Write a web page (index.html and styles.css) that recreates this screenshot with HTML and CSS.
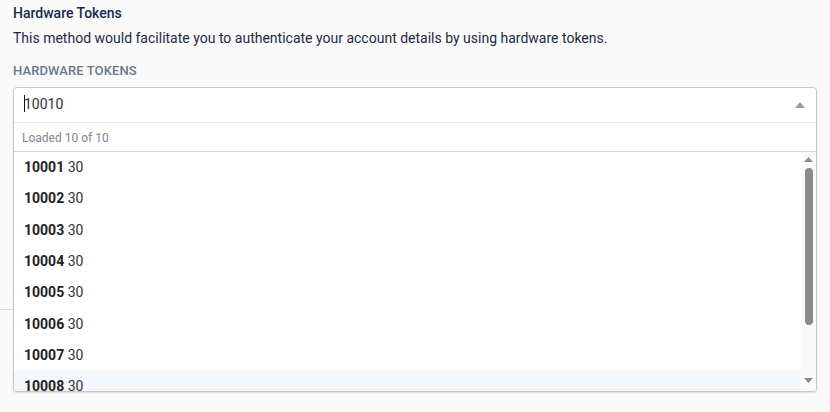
FILE: index.html
```html
<!DOCTYPE html>
<html>
<head>
<meta charset="utf-8">
<link rel="stylesheet" href="styles.css">
</head>
<body>
<div class="page">
  <div class="backline"></div>
  <section class="panel">
    <h3 class="title">Hardware Tokens</h3>
    <p class="desc">This method would facilitate you to authenticate your account details by using hardware tokens.</p>
    <div class="label">HARDWARE TOKENS</div>
    <div class="select">
      <div class="input-row">
        <span class="value"><span class="caret"></span>10010</span>
        <svg class="toggle" width="10" height="6" viewBox="0 0 10 6"><path d="M0 6 L5 0 L10 6 Z" fill="#9a9a9a"/></svg>
      </div>
      <div class="status">Loaded 10 of 10</div>
      <div class="list-wrap">
        <ul class="list">
          <li class="item"><b>10001</b> 30</li>
          <li class="item"><b>10002</b> 30</li>
          <li class="item"><b>10003</b> 30</li>
          <li class="item"><b>10004</b> 30</li>
          <li class="item"><b>10005</b> 30</li>
          <li class="item"><b>10006</b> 30</li>
          <li class="item"><b>10007</b> 30</li>
          <li class="item active"><b>10008</b> 30</li>
          <li class="item"><b>10009</b> 30</li>
          <li class="item"><b>10010</b> 30</li>
        </ul>
        <div class="scrollbar">
          <svg class="arrow" width="9" height="5" viewBox="0 0 9 5"><path d="M0 5 L4.5 0 L9 5 Z" fill="#8a8a8a"/></svg>
          <div class="track"><div class="thumb"></div></div>
          <svg class="arrow" width="9" height="5" viewBox="0 0 9 5"><path d="M0 0 L4.5 5 L9 0 Z" fill="#8a8a8a"/></svg>
        </div>
      </div>
    </div>
  </section>
</div>
</body>
</html>
```

FILE: styles.css
```css
html, body {
  margin: 0;
  padding: 0;
  background: #fafafa;
  font-family: Roboto, "Liberation Sans", Arial, sans-serif;
}
.page {
  position: relative;
  width: 830px;
  height: 412px;
  overflow: hidden;
}
.backline {
  position: absolute;
  left: 0;
  top: 309px;
  width: 20px;
  height: 1px;
  background: #dcdcdc;
}
.panel {
  position: relative;
  padding: 3px 13px 0 13px;
}
.title {
  margin: 0;
  font-size: 14px;
  line-height: 20px;
  font-weight: 500;
  color: #172b4d;
}
.desc {
  margin: 5px 0 0 0;
  font-size: 14px;
  line-height: 20px;
  color: #1c2a44;
}
.label {
  margin-top: 15px;
  font-size: 13px;
  line-height: 16px;
  font-weight: 500;
  color: #6b778c;
  letter-spacing: 0.1px;
}
.select {
  margin-top: 8px;
  width: 802px;
  border: 1px solid #c8c8c8;
  border-radius: 4px;
  background: #fff;
  box-shadow: 0 1px 2px rgba(0,0,0,0.12);
  overflow: hidden;
}
.input-row {
  height: 34px;
  display: flex;
  align-items: center;
  justify-content: space-between;
  padding: 0 10px 0 10px;
  border-bottom: 1px solid #e6e6e6;
}
.value {
  display: flex;
  align-items: center;
  font-size: 14px;
  color: #333;
  position: relative;
  top: -1px;
}
.caret {
  display: inline-block;
  width: 1px;
  height: 17px;
  background: #111;
  margin-right: -1px;
  position: relative;
  top: -1px;
}
.toggle {
  margin-right: 1px;
}
.status {
  height: 28px;
  line-height: 30px;
  padding-left: 8px;
  font-size: 12px;
  color: #7b8794;
  border-bottom: 1px solid #d5d5d5;
}
.list-wrap {
  display: flex;
  height: 239px;
}
.list {
  flex: 1;
  list-style: none;
  margin: 0;
  padding: 0;
  overflow: hidden;
}
.item {
  height: 31.33px;
  line-height: 31.33px;
  padding-left: 10px;
  font-size: 14px;
  color: #333;
}
.item b {
  color: #222;
  font-weight: 700;
}
.item.active {
  background: #f3f8fd;
}
.scrollbar {
  width: 15px;
  background: #fafafa;
  display: flex;
  flex-direction: column;
  align-items: center;
  padding: 5px 0 8px 0;
  box-sizing: border-box;
}
.arrow {
  flex: none;
}
.track {
  flex: 1;
  width: 100%;
  padding: 6px 0 0 0;
  display: flex;
  justify-content: center;
}
.thumb {
  width: 8px;
  height: 157px;
  background: #8c8c8c;
  border-radius: 4px;
}
```
